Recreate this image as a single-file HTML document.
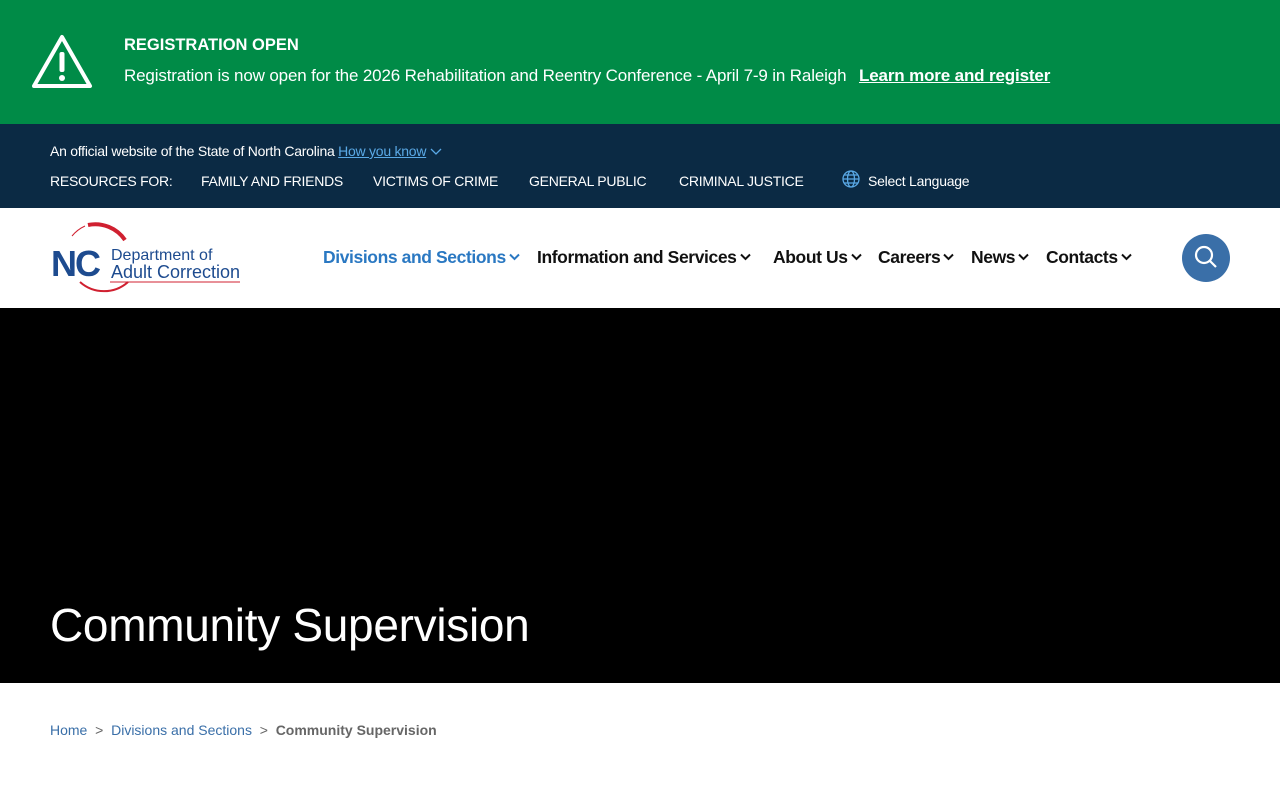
<!DOCTYPE html>
<html><head><meta charset="utf-8"><style>
*{margin:0;padding:0;box-sizing:border-box}
body{width:1280px;height:800px;overflow:hidden;font-family:"Liberation Sans",sans-serif;background:#fff}
.alert{position:absolute;left:0;top:0;width:1280px;height:124px;background:#008b47;color:#fff}
.alert .t{position:absolute;left:124px;top:36px;font-weight:bold;font-size:16.5px}
.alert .m{position:absolute;left:124px;top:66px;font-size:17px;letter-spacing:-0.15px;white-space:nowrap}
.alert .m a{color:#fff;font-weight:bold;text-decoration:underline;margin-left:8px}
.top{position:absolute;left:0;top:124px;width:1280px;height:84px;background:#0b2a44;color:#fff;font-size:14px;letter-spacing:-0.25px}
.top span{position:absolute;white-space:nowrap}
.top a{color:#5aa9e6;text-decoration:underline}
.hdr{position:absolute;top:208px;left:0;width:1280px;height:100px;background:#fff}
.nav{position:absolute;top:39px;left:0;font-size:17.5px;font-weight:bold;color:#111;letter-spacing:-0.4px}
.nav span{position:absolute;white-space:nowrap}
.nav svg{vertical-align:2px;margin-left:3px}
.hero{position:absolute;top:308px;left:0;width:1280px;height:375px;background:#000}
.hero h1{position:absolute;left:50px;top:290px;color:#fff;font-size:46px;font-weight:normal;letter-spacing:-0.3px}
.bc{position:absolute;top:722px;left:50px;font-size:14px;color:#666}
.bc a{color:#3a6fa8;text-decoration:none}
</style></head><body>
<div class="alert">
<svg style="position:absolute;left:31px;top:34px" width="62" height="55" viewBox="0 0 62 55"><path d="M31 3 L59 52 L3 52 Z" fill="none" stroke="#fff" stroke-width="4" stroke-linejoin="round"/><rect x="28.5" y="18" width="5" height="20" rx="2" fill="#fff"/><circle cx="31" cy="44" r="3" fill="#fff"/></svg>
<div class="t">REGISTRATION OPEN</div>
<div class="m">Registration is now open for the 2026 Rehabilitation and Reentry Conference - April 7-9 in Raleigh <a>Learn more and register</a></div>
</div>
<div class="top">
<span style="left:50px;top:19px">An official website of the State of North Carolina <a>How you know</a> <svg width="12" height="8" viewBox="0 0 12 8"><path d="M1 1l5 5 5-5" fill="none" stroke="#5aa9e6" stroke-width="1.3"/></svg></span>
<span style="left:50px;top:49px">RESOURCES FOR:</span>
<span style="left:201px;top:49px">FAMILY AND FRIENDS</span>
<span style="left:373px;top:49px">VICTIMS OF CRIME</span>
<span style="left:529px;top:49px">GENERAL PUBLIC</span>
<span style="left:679px;top:49px">CRIMINAL JUSTICE</span>
<svg style="position:absolute;left:842px;top:46px" width="18" height="18" viewBox="0 0 18 18" fill="none" stroke="#5aa9e6" stroke-width="1.3"><circle cx="9" cy="9" r="8"/><ellipse cx="9" cy="9" rx="3.5" ry="8"/><path d="M1 9h16M2.5 5h13M2.5 13h13"/></svg>
<span style="left:868px;top:49px">Select Language</span>
</div>
<div class="hdr">
<svg style="position:absolute;left:50px;top:12px" width="195" height="75" viewBox="0 0 195 75">
<path d="M22 16 A36 36 0 0 1 35 6" fill="none" stroke="#d02030" stroke-width="1"/>
<path d="M38 5 A36 36 0 0 1 75 20" fill="none" stroke="#d02030" stroke-width="4"/>
<path d="M30 62 A36 36 0 0 0 78 62" fill="none" stroke="#d02030" stroke-width="2"/>
<path d="M60 62 L190 62" stroke="#d02030" stroke-width="1"/>
<text x="1" y="56" font-family="Liberation Sans" font-weight="bold" font-size="36" fill="#1d4b8f" letter-spacing="-2">NC</text>
<text x="61" y="40" font-family="Liberation Sans" font-size="16" fill="#1d4b8f">Department of</text>
<text x="61" y="58" font-family="Liberation Sans" font-size="18" fill="#1d4b8f">Adult Correction</text></svg>
<div class="nav">
<span style="left:323px;color:#2a78c2">Divisions and Sections<svg width="11" height="8" viewBox="0 0 11 8"><path d="M1 1.5l4.5 4.5 4.5-4.5" fill="none" stroke="#2a78c2" stroke-width="2"/></svg></span>
<span style="left:537px">Information and Services<svg width="11" height="8" viewBox="0 0 11 8"><path d="M1 1.5l4.5 4.5 4.5-4.5" fill="none" stroke="#111" stroke-width="2"/></svg></span>
<span style="left:773px">About Us<svg width="11" height="8" viewBox="0 0 11 8"><path d="M1 1.5l4.5 4.5 4.5-4.5" fill="none" stroke="#111" stroke-width="2"/></svg></span>
<span style="left:878px">Careers<svg width="11" height="8" viewBox="0 0 11 8"><path d="M1 1.5l4.5 4.5 4.5-4.5" fill="none" stroke="#111" stroke-width="2"/></svg></span>
<span style="left:971px">News<svg width="11" height="8" viewBox="0 0 11 8"><path d="M1 1.5l4.5 4.5 4.5-4.5" fill="none" stroke="#111" stroke-width="2"/></svg></span>
<span style="left:1046px">Contacts<svg width="11" height="8" viewBox="0 0 11 8"><path d="M1 1.5l4.5 4.5 4.5-4.5" fill="none" stroke="#111" stroke-width="2"/></svg></span></div>
<div style="position:absolute;left:1182px;top:26px;width:48px;height:48px;border-radius:50%;background:#3a6fa8"><svg width="48" height="48" viewBox="0 0 48 48" fill="none" stroke="#fff" stroke-width="2.2"><circle cx="22" cy="21" r="8"/><path d="M28 27l6 6"/></svg></div>
</div>
<div class="hero"><h1>Community Supervision</h1></div>
<div class="bc"><a>Home</a> &nbsp;&gt;&nbsp; <a>Divisions and Sections</a> &nbsp;&gt;&nbsp; <b>Community Supervision</b></div>
</body></html>
